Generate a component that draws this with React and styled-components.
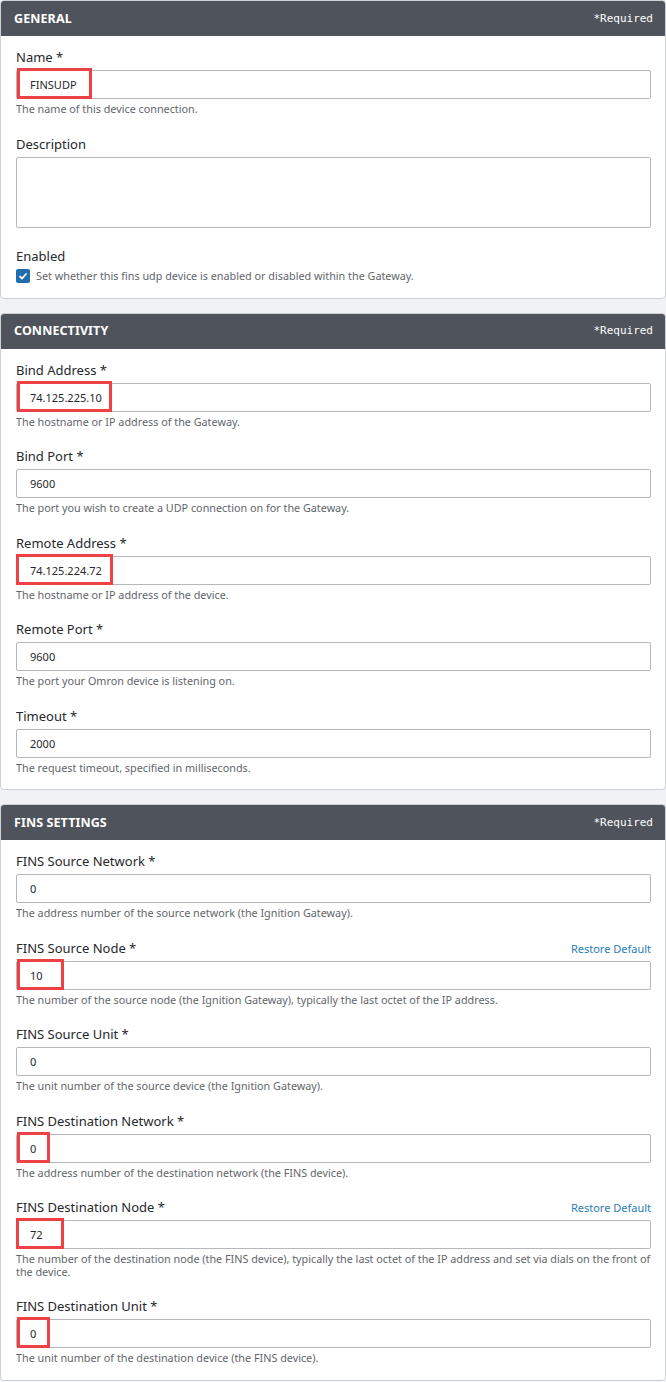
import React from 'react';
import styled, { createGlobalStyle } from 'styled-components';

const GlobalStyle = createGlobalStyle`
  body {
    margin: 0;
    background: #f1f2f5;
    font-family: "Noto Sans", "Open Sans", sans-serif;
  }
`;

const sections = [
  {
    title: 'GENERAL',
    fields: [
      { label: 'Name *', value: 'FINSUDP', help: 'The name of this device connection.', mark: 75 },
      { label: 'Description', textarea: true },
    ],
    enabled: 'Set whether this fins udp device is enabled or disabled within the Gateway.',
  },
  {
    title: 'CONNECTIVITY',
    fields: [
      { label: 'Bind Address *', value: '74.125.225.10', help: 'The hostname or IP address of the Gateway.', mark: 95 },
      { label: 'Bind Port *', value: '9600', help: 'The port you wish to create a UDP connection on for the Gateway.' },
      { label: 'Remote Address *', value: '74.125.224.72', help: 'The hostname or IP address of the device.', mark: 97, markLeft: -1 },
      { label: 'Remote Port *', value: '9600', help: 'The port your Omron device is listening on.' },
      { label: 'Timeout *', value: '2000', help: 'The request timeout, specified in milliseconds.' },
    ],
  },
  {
    title: 'FINS SETTINGS',
    fields: [
      { label: 'FINS Source Network *', value: '0', help: 'The address number of the source network (the Ignition Gateway).' },
      { label: 'FINS Source Node *', value: '10', help: 'The number of the source node (the Ignition Gateway), typically the last octet of the IP address.', mark: 47, restore: true },
      { label: 'FINS Source Unit *', value: '0', help: 'The unit number of the source device (the Ignition Gateway).' },
      { label: 'FINS Destination Network *', value: '0', help: 'The address number of the destination network (the FINS device).', mark: 33 },
      { label: 'FINS Destination Node *', value: '72', help: 'The number of the destination node (the FINS device), typically the last octet of the IP address and set via dials on the front of the device.', mark: 48, markLeft: -1, restore: true },
      { label: 'FINS Destination Unit *', value: '0', help: 'The unit number of the destination device (the FINS device).', mark: 33 },
    ],
  },
];

export default function App() {
  return (
    <>
      <GlobalStyle />
      <Page>
        {sections.map((s) => (
          <Card key={s.title}>
            <Header>
              <Title>{s.title}</Title>
              <Required>*Required</Required>
            </Header>
            <Body>
              {s.fields.map((f) => (
                <Field key={f.label}>
                  <LabelRow>
                    <Label>{f.label}</Label>
                    {f.restore && <Restore href="#">Restore Default</Restore>}
                  </LabelRow>
                  {f.textarea ? (
                    <TextArea />
                  ) : (
                    <InputWrap>
                      <Input defaultValue={f.value} readOnly />
                      {f.mark && <Mark $width={f.mark} $left={f.markLeft || 0} />}
                    </InputWrap>
                  )}
                  {f.help && <Help>{f.help}</Help>}
                </Field>
              ))}
              {s.enabled && (
                <Field>
                  <Label>Enabled</Label>
                  <CheckRow>
                    <Check>
                      <svg width="10" height="10" viewBox="0 0 10 10">
                        <path d="M1.5 5.2 L4 7.5 L8.5 2.5" fill="none" stroke="#fff" strokeWidth="1.8" />
                      </svg>
                    </Check>
                    <CheckText>{s.enabled}</CheckText>
                  </CheckRow>
                </Field>
              )}
            </Body>
          </Card>
        ))}
      </Page>
    </>
  );
}

const Page = styled.div`
  display: flex;
  flex-direction: column;
  gap: 14px;
  width: 666px;
`;

const Card = styled.section`
  background: #fff;
  border: 1px solid #cdd0d5;
  border-radius: 4px;
  overflow: hidden;
`;

const Header = styled.div`
  height: 36px;
  background: #4f535b;
  display: flex;
  align-items: center;
  justify-content: space-between;
  padding: 0 13px 0 14px;
  margin: -1px -1px 0;
`;

const Title = styled.div`
  color: #fff;
  font-weight: 700;
  font-size: 12.5px;
  letter-spacing: 0.1px;
`;

const Required = styled.div`
  color: #fff;
  font-family: "DejaVu Sans Mono", "Liberation Mono", monospace;
  font-size: 11px;
`;

const Body = styled.div`
  display: flex;
  flex-direction: column;
  gap: 19px;
  padding: 12px 14px 15px 15px;
`;

const Field = styled.div`
  display: flex;
  flex-direction: column;
`;

const LabelRow = styled.div`
  display: flex;
  align-items: baseline;
  justify-content: space-between;
`;

const Label = styled.div`
  font-size: 13px;
  line-height: 18px;
  color: #25282c;
`;

const Restore = styled.a`
  font-size: 11px;
  color: #2a7db3;
  text-decoration: none;
`;

const InputWrap = styled.div`
  position: relative;
  margin-top: 4px;
`;

const Input = styled.input`
  box-sizing: border-box;
  width: 100%;
  height: 29px;
  border: 1px solid #b4b7bc;
  border-radius: 2px;
  padding: 0 13px;
  font-family: "Noto Sans", sans-serif;
  font-size: 11px;
  color: #25282c;
  outline: none;
`;

const Mark = styled.div`
  position: absolute;
  top: -2px;
  left: ${({ $left }) => $left + 1}px;
  width: ${({ $width }) => $width}px;
  height: 31px;
  box-sizing: border-box;
  border: 3px solid #ee4145;
  pointer-events: none;
`;

const TextArea = styled.textarea`
  box-sizing: border-box;
  width: 100%;
  height: 71px;
  margin-top: 4px;
  border: 1px solid #b4b7bc;
  border-radius: 2px;
  resize: none;
  display: block;
`;

const Help = styled.div`
  margin-top: 4px;
  font-size: 10.8px;
  line-height: 12.5px;
  color: #62666b;
`;

const CheckRow = styled.div`
  display: flex;
  align-items: center;
  gap: 6px;
  margin-top: 4px;
`;

const Check = styled.span`
  width: 14px;
  height: 14px;
  border-radius: 2px;
  background: #1f6fae;
  display: flex;
  align-items: center;
  justify-content: center;
`;

const CheckText = styled.span`
  font-size: 10.8px;
  line-height: 14px;
  color: #62666b;
`;
